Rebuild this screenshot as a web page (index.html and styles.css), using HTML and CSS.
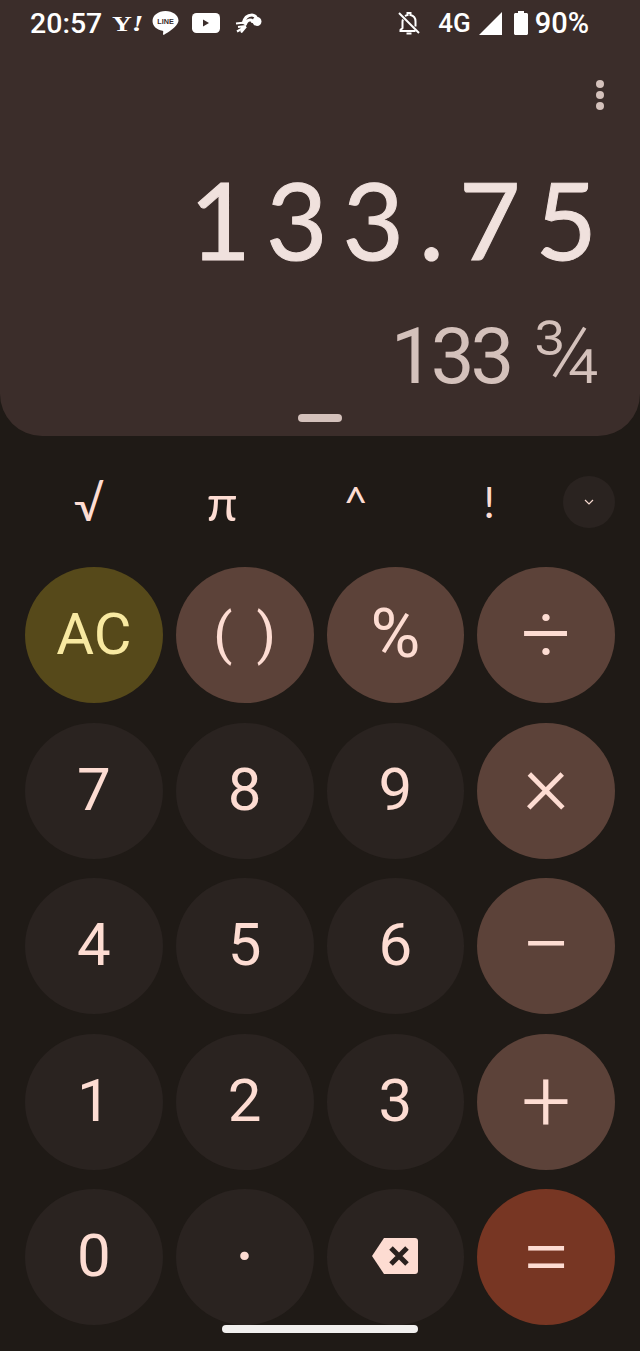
FILE: index.html
```html
<html>
    <head>
        <meta charset="utf-8">
        <link rel="stylesheet" href="styles.css">
    </head>
    <body>
        <div class="panel">
            <div class="status">
                <span class="time">20:57</span>
                <span class="yahoo">Y<em>!</em></span>
                <svg class="ic-line" viewBox="0 0 26 26">
                    <path d="M13 1C6 1 .5 5.200.5 10.600c0 4.800 4 8.600 9.600 9.400.8.200.8.600.7 1.200l-.2 2c-.1.600.3 1 1 .6 3.400-1.900 10.900-6.700 12.500-10 .6-1.200 1.400-2.500 1.400-3.800C25.500 5.200 20 1 13 1z" fill="#fff"/>
                    <text x="13" y="13.300" class="line-text">LINE</text>
                </svg>
                <svg class="ic-yt" viewBox="0 0 28 20">
                    <rect x="0" y="0" width="28" height="20" rx="4.500" fill="#fff"/>
                    <path d="M11 6.500v7l6-3.500z" fill="#3b2d2a"/>
                </svg>
                <svg class="ic-run" viewBox="0 0 27 20">
                    <path d="M8 11c1-5 4-9 9-9 3 0 4 2 5 4M10 12c1-3 3-5 5-5 2 0 3 1 3 3" fill="none" stroke="#fff" stroke-width="3.200"/>
                    <circle cx="22" cy="8.500" r="4.500" fill="#fff"/>
                    <path d="M1 10.500l9-1M3 14l8-1M2 18.500l7-4M6 19.500l5-6" stroke="#fff" stroke-width="2.200"/>
                </svg>
                <span class="spacer"></span>
                <svg class="ic-bell" viewBox="0 0 24 24">
                    <path d="M18.500 15.500V10.500c0-3.400-2.300-5.800-5-6.400V2h-3v2.100c-.9.200-1.700.6-2.400 1.200M6 8.500c-.3.700-.5 1.400-.5 2.200V17L3.500 19v1h15M9.500 22.500h5" fill="none" stroke="#fff" stroke-width="2"/>
                    <path d="M2 2l20 20" stroke="#fff" stroke-width="2"/>
                </svg>
                <span class="net">4G</span>
                <svg class="ic-signal" viewBox="0 0 23 23"><path d="M0 23L23 0v23z" fill="#fff"/></svg>
                <svg class="ic-batt" viewBox="0 0 14 24">
                    <path d="M4 0h6v2h2.500c.8 0 1.500.7 1.500 1.500v19c0 .8-.7 1.500-1.500 1.500h-11C.7 24 0 23.300 0 22.500v-19C0 2.700.7 2 1.500 2H4z" fill="#fff"/>
                </svg>
                <span class="pct">90%</span>
            </div>
            <div class="menu"><i></i><i></i><i></i></div>
            <div class="formula">133.75</div>
            <div class="result">133 <span class="frac">¾</span></div>
            <div class="grip"></div>
        </div>
        <div class="extras">
            <span class="sci root">√</span>
            <span class="sci pi">π</span>
            <span class="sci">^</span>
            <span class="sci">!</span>
            <div class="collapse">
                <svg viewBox="0 0 10 6"><path d="M1 1l4 4 4-4" fill="none" stroke="#f5d8cf" stroke-width="1.200"/></svg>
            </div>
        </div>
        <div class="keys">
            <div class="key clear">AC</div>
            <div class="key op parens">( )</div>
            <div class="key op percent">%</div>
            <div class="key op sign">÷</div>
            <div class="key">7</div>
            <div class="key">8</div>
            <div class="key">9</div>
            <div class="key op sign times">×</div>
            <div class="key">4</div>
            <div class="key">5</div>
            <div class="key">6</div>
            <div class="key op sign">−</div>
            <div class="key">1</div>
            <div class="key">2</div>
            <div class="key">3</div>
            <div class="key op sign">+</div>
            <div class="key">0</div>
            <div class="key dot">·</div>
            <div class="key">
                <svg class="ic-back" viewBox="0 0 48 38">
                    <path d="M13 1h31c1.700 0 3 1.300 3 3v30c0 1.700-1.300 3-3 3H13L1 19z" fill="#fddcd2"/>
                    <path d="M20 11l16 16M36 11L20 27" stroke="#2a211e" stroke-width="5"/>
                </svg>
            </div>
            <div class="key equals sign">=</div>
        </div>
        <div class="home"></div>
    </body>
</html>
```
FILE: styles.css
```css
body {
    margin: 0;
    width: 640px;
    height: 1351px;
    position: relative;
    overflow: hidden;
    background-color: #1f1a16;
    font-family: "Roboto", "Open Sans", sans-serif;
}

.panel {
    height: 436px;
    background-color: #3b2d2a;
    border-radius: 0 0 42px 42px;
    display: flex;
    flex-direction: column;
    align-items: flex-end;
    box-sizing: border-box;
}

.status {
    width: 100%;
    height: 46px;
    box-sizing: border-box;
    padding: 0 51px 0 30px;
    display: flex;
    align-items: center;
    color: #fff;
    font-weight: 500;
}

.time {
    font-size: 28.500px;
    margin-right: 10px;
}

.yahoo {
    width: 28px;
    margin-right: 12px;
    font-family: "Liberation Serif", serif;
    font-weight: 700;
    font-size: 22px;
    transform: scaleX(1.250);
    transform-origin: left center;
}

.yahoo em {
    font-size: 24px;
}

.ic-line {
    width: 27px;
    height: 27px;
    margin-right: 13px;
}

.line-text {
    font-family: "Liberation Sans", sans-serif;
    font-size: 7px;
    font-weight: 700;
    text-anchor: middle;
    fill: #3b2d2a;
}

.ic-yt {
    width: 28px;
    height: 20px;
    margin-right: 15px;
}

.ic-run {
    width: 27px;
    height: 20px;
}

.spacer {
    flex: 1;
}

.ic-bell {
    width: 24px;
    height: 24px;
    margin-right: 17px;
}

.net {
    font-size: 26px;
    margin-right: 8px;
}

.ic-signal {
    width: 23px;
    height: 23px;
    margin-right: 12px;
}

.ic-batt {
    width: 14px;
    height: 24px;
    margin-right: 7px;
}

.pct {
    font-size: 29px;
}

.menu {
    margin: 34px 36px 0 0;
    display: flex;
    flex-direction: column;
    gap: 3px;
}

.menu i {
    width: 8px;
    height: 8px;
    border-radius: 50%;
    background-color: #d4c1bb;
}

.formula {
    margin: 41px 28px 0 0;
    font-family: "Lato", sans-serif;
    font-size: 106px;
    line-height: 136px;
    letter-spacing: 15px;
    color: #f0e1dd;
    -webkit-text-stroke: 1px #f0e1dd;
}

.result {
    margin: 21px 40px 0 0;
    font-size: 78px;
    line-height: 90px;
    letter-spacing: -4px;
    word-spacing: 6px;
    color: #d4c1bb;
}

.frac {
    font-size: 88px;
    font-weight: 300;
    letter-spacing: 0;
}

.grip {
    align-self: center;
    margin-top: 12px;
    width: 44px;
    height: 8px;
    border-radius: 4px;
    background-color: #d4c1bb;
}

.extras {
    height: 131px;
    box-sizing: border-box;
    padding: 40px 25px 0 22px;
    display: flex;
    align-items: flex-start;
    font-family: "Lato", sans-serif;
}

.sci {
    width: 133.500px;
    height: 52px;
    display: flex;
    align-items: center;
    justify-content: center;
    font-size: 42px;
    color: #fddcd2;
}

.root {
    font-size: 48px;
}

.pi {
    font-size: 50px;
}

.collapse {
    width: 52px;
    height: 52px;
    margin-left: 7px;
    border-radius: 50%;
    background-color: #2a2320;
    display: flex;
    align-items: center;
    justify-content: center;
}

.collapse svg {
    width: 10px;
    height: 6px;
}

.keys {
    padding: 0 25px;
    display: grid;
    grid-template-columns: repeat(4, 1fr);
    grid-auto-rows: 136px;
    column-gap: 13px;
    row-gap: 19.500px;
}

.key {
    box-sizing: border-box;
    padding-bottom: 3px;
    border-radius: 50%;
    background-color: #2a2320;
    color: #fddcd2;
    font-size: 60px;
    display: flex;
    align-items: center;
    justify-content: center;
}

.key.op {
    background-color: #5c4239;
}

.key.clear {
    background-color: #56491a;
    color: #f8e9a1;
    font-size: 58px;
}

.key.equals {
    background-color: #773623;
}

.key.parens {
    font-size: 56px;
    word-spacing: 10px;
}

.key.percent {
    font-size: 68px;
}

.key.dot {
    font-size: 76px;
    padding-bottom: 0;
}

.key.sign {
    font-size: 88px;
    font-weight: 300;
    padding-bottom: 3px;
}

.key.times {
    padding-bottom: 15px;
}

.ic-back {
    width: 48px;
    height: 38px;
}

.home {
    position: absolute;
    left: 222px;
    top: 1325px;
    width: 196px;
    height: 8px;
    border-radius: 4px;
    background-color: #f1efee;
}
```
